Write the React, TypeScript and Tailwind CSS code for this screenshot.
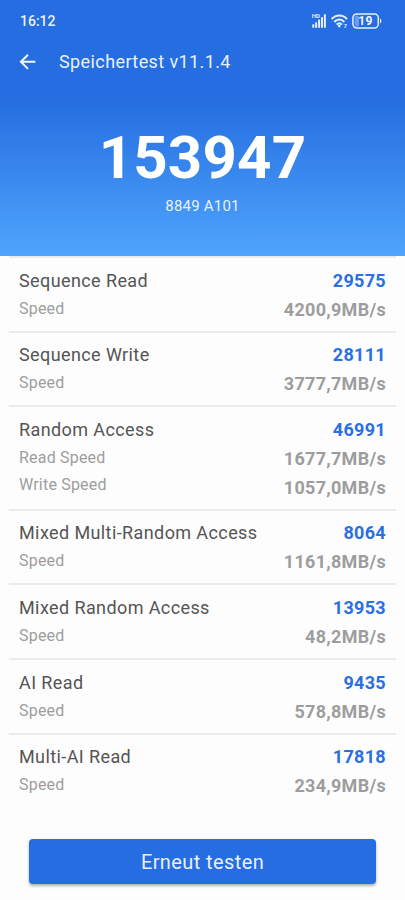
type Metric = { label: string; value: string };

type TestResult = {
  name: string;
  score: string;
  metrics: Metric[];
};

const results: TestResult[] = [
  { name: "Sequence Read", score: "29575", metrics: [{ label: "Speed", value: "4200,9MB/s" }] },
  { name: "Sequence Write", score: "28111", metrics: [{ label: "Speed", value: "3777,7MB/s" }] },
  {
    name: "Random Access",
    score: "46991",
    metrics: [
      { label: "Read Speed", value: "1677,7MB/s" },
      { label: "Write Speed", value: "1057,0MB/s" },
    ],
  },
  { name: "Mixed Multi-Random Access", score: "8064", metrics: [{ label: "Speed", value: "1161,8MB/s" }] },
  { name: "Mixed Random Access", score: "13953", metrics: [{ label: "Speed", value: "48,2MB/s" }] },
  { name: "AI Read", score: "9435", metrics: [{ label: "Speed", value: "578,8MB/s" }] },
  { name: "Multi-AI Read", score: "17818", metrics: [{ label: "Speed", value: "234,9MB/s" }] },
];

const SignalIcon = () => (
  <svg width="15" height="16" viewBox="0 0 15 16" fill="#e6effc">
    <text x="-0.2" y="4.8" fontSize="6" fontWeight="700" fontFamily="Roboto, sans-serif">
      HD
    </text>
    <rect x="0.3" y="11.2" width="2" height="3.6" rx="0.4" />
    <rect x="3.2" y="9.2" width="2" height="5.6" rx="0.4" />
    <rect x="6.1" y="6.6" width="2" height="8.2" rx="0.4" />
    <rect x="9" y="4" width="2" height="10.8" rx="0.4" />
    <rect x="11.9" y="1.2" width="2" height="13.6" rx="0.4" />
  </svg>
);

const WifiIcon = () => (
  <svg width="17" height="16" viewBox="0 0 17 16" fill="none" stroke="#e6effc" strokeWidth="2.1">
    <path d="M0.6 6.1 C4.8 1.2 11.8 1.2 16 6.1" />
    <path d="M3.3 9 C6 5.7 10.6 5.7 13.3 9" />
    <path d="M5.8 11.7 C7.3 9.8 9.3 9.8 10.8 11.7" />
    <circle cx="8.3" cy="13.1" r="1.4" fill="#e6effc" stroke="none" />
    <text x="12.4" y="15.2" fontSize="6" fontWeight="700" fontFamily="Roboto, sans-serif" fill="#e6effc" stroke="none">
      7
    </text>
  </svg>
);

const BatteryIcon = () => (
  <svg width="31" height="16" viewBox="0 0 31 16">
    <rect x="2.6" y="2.6" width="4.4" height="11" rx="1.5" fill="#6c9ceb" />
    <rect x="0.9" y="0.9" width="25.4" height="14.2" rx="4" fill="none" stroke="#e6effc" strokeWidth="1.5" />
    <path d="M28 5.6 C29.8 6.2 29.8 9.8 28 10.4 Z" fill="#e6effc" />
    <text
      x="13.6"
      y="12.4"
      textAnchor="middle"
      fontSize="12"
      fontWeight="700"
      letterSpacing="0.4"
      fontFamily="Roboto, sans-serif"
      fill="#f2f7fe"
    >
      19
    </text>
  </svg>
);

const BackIcon = () => (
  <svg width="18" height="18" viewBox="0 0 18 18" fill="none" stroke="#f2f7fe" strokeWidth="2">
    <path d="M16.4 8.8 H2.2 M9 1.7 L1.9 8.8 L9 15.9" />
  </svg>
);

const Header = () => (
  <header className="h-64 bg-linear-to-b from-[#256de0] from-38% to-[#50a4fc] text-white">
    {/* Status bar */}
    <div className="flex h-[41px] items-center justify-between pr-[22px] pl-5">
      <span className="pt-px text-[14px] font-medium text-[#e9f1fd]">16:12</span>
      <div className="flex items-center gap-1">
        <SignalIcon />
        <WifiIcon />
        <BatteryIcon />
      </div>
    </div>

    {/* Title bar */}
    <div className="flex h-[41px] items-center gap-[22px] pl-[19px]">
      <BackIcon />
      <h1 className="text-[18px] tracking-[0.4px] text-[#e9f1fd]">Speichertest v11.1.4</h1>
    </div>

    {/* Total score */}
    <div className="flex flex-col items-center pt-[46px]">
      <p className="text-[60px] leading-[60px] font-bold tracking-[0.2px]">153947</p>
      <p className="mt-2 text-[15px] leading-5 tracking-[0.2px] text-[#e9f1fd]">8849 A101</p>
    </div>
  </header>
);

const ResultRow = ({ result }: { result: TestResult }) => (
  <li className="flex justify-between border-t-2 border-[#ebebeb] px-2.5 pt-[8.6px] pb-[7px] whitespace-nowrap">
    <div className="text-[16px] tracking-[0.2px] text-[#9d9d9d]">
      <h2 className="text-[18px] leading-7 tracking-[0.4px] text-[#555]">{result.name}</h2>
      {result.metrics.map((metric) => (
        <p key={metric.label} className="leading-[27px]">
          {metric.label}
        </p>
      ))}
    </div>
    <div className="text-right text-[18px] font-bold tracking-[0.3px] text-[#9d9d9d]">
      <p className="leading-7 text-[#2a6fe3]">{result.score}</p>
      {result.metrics.map((metric) => (
        <p key={metric.label} className="leading-[29px]">
          {metric.value}
        </p>
      ))}
    </div>
  </li>
);

export default function App() {
  return (
    <div className="flex h-[900px] w-[405px] flex-col overflow-hidden bg-[#fdfdfd] font-[Roboto,sans-serif]">
      <Header />
      <ul className="mx-[9px]">
        {results.map((result) => (
          <ResultRow key={result.name} result={result} />
        ))}
      </ul>
      <button className="mx-[29px] mt-auto mb-4 h-[45px] rounded-[4px] bg-[#256de0] text-[20px] tracking-[0.4px] text-[#e9f1fd] shadow-[0_2px_3px_rgba(0,0,0,0.3)]">
        Erneut testen
      </button>
    </div>
  );
}
